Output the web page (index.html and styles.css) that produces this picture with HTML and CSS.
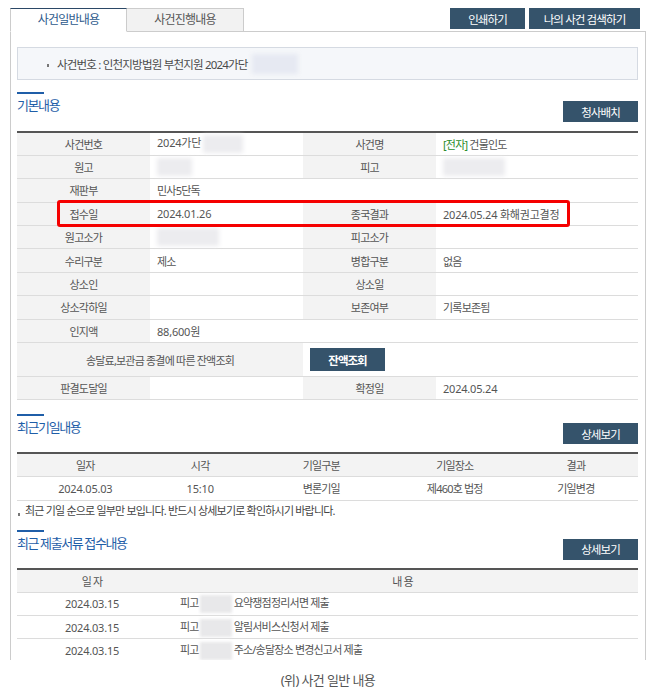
FILE: index.html
```html
<!DOCTYPE html>
<html lang="ko">
<head>
    <meta charset="UTF-8" />
    <meta name="viewport" content="width=device-width, initial-scale=1">
    <title>사건일반내용</title>
    <link rel="stylesheet" href="styles.css">
</head>
<body>
<div class="wrap">
    <div class="top">
        <ul class="tabs">
            <li class="on">사건일반내용</li>
            <li>사건진행내용</li>
        </ul>
        <div class="top-btns">
            <button class="btn">인쇄하기</button>
            <button class="btn">나의 사건 검색하기</button>
        </div>
    </div>

    <div class="panel">
        <div class="case-no">
            <span class="bullet"></span>사건번호 : 인천지방법원 부천지원 2024가단<span class="blur blur-info"></span>
        </div>

        <div class="sec-head">
            <h3 class="tit">기본내용</h3>
            <button class="btn">청사배치</button>
        </div>
        <div class="tbl-box">
            <table class="tbl info">
                <colgroup>
                    <col class="c-label">
                    <col class="c-val">
                    <col class="c-label">
                    <col class="c-val2">
                </colgroup>
                <tr>
                    <th>사건번호</th><td class="num">2024가단<span class="blur blur-m"></span></td>
                    <th>사건명</th><td><span class="e-mark">[전자]</span> 건물인도</td>
                </tr>
                <tr>
                    <th>원고</th><td><span class="blur blur-s"></span></td>
                    <th>피고</th><td><span class="blur blur-l"></span></td>
                </tr>
                <tr>
                    <th>재판부</th><td colspan="3">민사5단독</td>
                </tr>
                <tr>
                    <th>접수일</th><td class="num">2024.01.26</td>
                    <th>종국결과</th><td class="num">2024.05.24 화해권고결정</td>
                </tr>
                <tr>
                    <th>원고소가</th><td><span class="blur blur-l"></span></td>
                    <th>피고소가</th><td></td>
                </tr>
                <tr>
                    <th>수리구분</th><td>제소</td>
                    <th>병합구분</th><td>없음</td>
                </tr>
                <tr>
                    <th>상소인</th><td></td>
                    <th>상소일</th><td></td>
                </tr>
                <tr>
                    <th>상소각하일</th><td></td>
                    <th>보존여부</th><td>기록보존됨</td>
                </tr>
                <tr>
                    <th>인지액</th><td colspan="3" class="num">88,600원</td>
                </tr>
                <tr class="tall">
                    <th colspan="2">송달료,보관금 종결에 따른 잔액조회</th>
                    <td colspan="2"><button class="btn">잔액조회</button></td>
                </tr>
                <tr>
                    <th>판결도달일</th><td></td>
                    <th>확정일</th><td class="num">2024.05.24</td>
                </tr>
            </table>
            <div class="mark"></div>
        </div>

        <div class="sec-head">
            <h3 class="tit">최근기일내용</h3>
            <button class="btn">상세보기</button>
        </div>
        <table class="tbl list dates">
            <colgroup>
                <col class="w22"><col class="w15"><col class="w24"><col class="w19"><col>
            </colgroup>
            <tr>
                <th>일자</th><th>시각</th><th>기일구분</th><th>기일장소</th><th>결과</th>
            </tr>
            <tr>
                <td class="num">2024.05.03</td><td class="num">15:10</td><td>변론기일</td><td>제460호 법정</td><td>기일변경</td>
            </tr>
        </table>
        <p class="note"><span class="bullet"></span>최근 기일 순으로 일부만 보입니다. 반드시 상세보기로 확인하시기 바랍니다.</p>

        <div class="sec-head">
            <h3 class="tit">최근 제출서류 접수내용</h3>
            <button class="btn">상세보기</button>
        </div>
        <table class="tbl list docs">
            <colgroup>
                <col class="w-date"><col>
            </colgroup>
            <tr>
                <th>일 자</th><th>내 용</th>
            </tr>
            <tr>
                <td class="num">2024.03.15</td><td class="left">피고<span class="blur blur-v"></span>요약쟁점정리서면 제출</td>
            </tr>
            <tr>
                <td class="num">2024.03.15</td><td class="left">피고<span class="blur blur-v"></span>알림서비스신청서 제출</td>
            </tr>
            <tr>
                <td class="num">2024.03.15</td><td class="left">피고<span class="blur blur-v"></span>주소/송달장소 변경신고서 제출</td>
            </tr>
        </table>
    </div>

    <p class="caption">(위) 사건 일반 내용</p>
</div>
</body>
</html>
```

FILE: styles.css
```css
:root {
    --navy: #35536b;
    --blue: #1f5ea8;
    --line: #dcdcdc;
    --head-bg: #f3f3f3;
    --text: #555;
}
* { margin: 0; padding: 0; box-sizing: border-box; }
body {
    font-family: "Noto Sans", "Noto Sans CJK KR", sans-serif;
    font-size: 11px;
    color: var(--text);
    background: #fff;
}
ul { list-style: none; }
button { font-family: inherit; cursor: pointer; }

.wrap {
    width: 646px;
    padding: 8px 0 0 10px;
}

/* tabs + top buttons */
.top {
    display: flex;
    justify-content: space-between;
    align-items: flex-start;
}
.tabs {
    display: flex;
    margin-bottom: -1px;
}
.tabs li {
    width: 117px;
    height: 24px;
    line-height: 22px;
    text-align: center;
    font-size: 12px;
    letter-spacing: -0.8px;
    border: 1px solid #ccc;
    background: #f2f2f2;
    color: #555;
}
.tabs li + li { border-left: none; }
.tabs li.on {
    background: #fff;
    color: #2d5a8c;
    border-top-color: #2b4866;
    border-bottom-color: #fff;
    border-right-color: #ccc;
}
.top-btns {
    display: flex;
    gap: 4px;
    margin-right: 6px;
}
.btn {
    height: 21px;
    padding: 0 12px;
    border: none;
    background: var(--navy);
    color: #fff;
    font-size: 11.5px;
    letter-spacing: -0.9px;
}
.top-btns .btn:first-child { width: 75px; }
.top-btns .btn:last-child { width: 111px; }

/* panel */
.panel {
    height: 629px;
    overflow: hidden;
    border: 1px solid #ccc;
    border-bottom: none;
    padding: 0 7px 0 6px;
}
.case-no {
    display: flex;
    align-items: center;
    height: 33px;
    margin-top: 15px;
    padding-left: 29px;
    background: #f5f7fa;
    border: 1px solid #d5dae2;
    font-size: 11.5px;
    letter-spacing: -0.8px;
    color: #4a4a4a;
}
.bullet {
    display: inline-block;
    width: 2px;
    height: 3px;
    margin-right: 8px;
    background: #777;
    vertical-align: -1px;
}
.case-no .bullet { margin-top: 4px; }

.blur {
    display: inline-block;
    vertical-align: middle;
    background: #ececef;
    filter: blur(2px);
}
.blur-info { width: 46px; height: 20px; margin-left: 4px; background: #e6e9f2; }
.blur-s { width: 35px; height: 18px; }
.blur-m { width: 40px; height: 18px; margin-left: 2px; }
.blur-l { width: 62px; height: 18px; }
.blur-v { width: 32px; height: 18px; margin: 0 2px 0 1px; background: #e8e8ea; filter: blur(1.5px); }

/* section titles */
.sec-head {
    display: flex;
    justify-content: space-between;
    align-items: flex-start;
    margin-top: 12px;
}
.tbl-box + .sec-head { margin-top: 14px; }
.tit {
    font-size: 13px;
    font-weight: normal;
    letter-spacing: -1.4px;
    color: var(--blue);
    line-height: 17px;
}
.tit::before {
    content: "";
    display: block;
    width: 27px;
    height: 2px;
    margin-bottom: 3px;
    background: var(--blue);
}
.sec-head .btn {
    width: 75px;
    margin-top: 9px;
}

/* tables */
.tbl {
    width: 100%;
    border-collapse: collapse;
    table-layout: fixed;
    border-top: 2px solid #555;
    margin-top: 9px;
    letter-spacing: -0.8px;
}
.tbl th, .tbl td {
    height: 23.4px;
    padding: 0 7px;
    border-bottom: 1px solid var(--line);
    font-weight: normal;
    white-space: nowrap;
}
.tbl th { background: var(--head-bg); text-align: center; }
.tbl td { text-align: left; }
.tbl .num { letter-spacing: -0.2px; }

.tbl-box { position: relative; }
.info .c-label { width: 133px; }
.info .c-val { width: 153px; }
.info .c-val2 { width: 202px; }
.info .tall th, .info .tall td { height: 34px; }
.info .tall .btn { width: 75px; height: 23px; font-weight: bold; letter-spacing: -1px; }
.e-mark { color: #2a8c2a; }

/* red highlight over the 접수일 row */
.mark {
    position: absolute;
    top: 69px;
    left: 40px;
    width: 513px;
    height: 27px;
    border: 3px solid #f50000;
    border-radius: 3px;
}

.list { margin-top: 8px; }
.list td { text-align: center; }
.list td.left { text-align: left; padding-left: 13px; }
.dates .w22 { width: 22%; }
.dates .w15 { width: 15%; }
.dates .w24 { width: 24%; }
.dates .w19 { width: 19%; }
.docs .w-date { width: 150px; }

.note {
    margin-top: 2px;
    line-height: 16px;
    font-size: 11px;
    letter-spacing: -0.8px;
    color: #444;
}
.note .bullet { margin: 0 5px 0 1px; }
.note + .sec-head { margin-top: 11px; }

.caption {
    margin-top: 10px;
    text-align: center;
    font-size: 13px;
    letter-spacing: -0.6px;
    color: #555;
}
```
